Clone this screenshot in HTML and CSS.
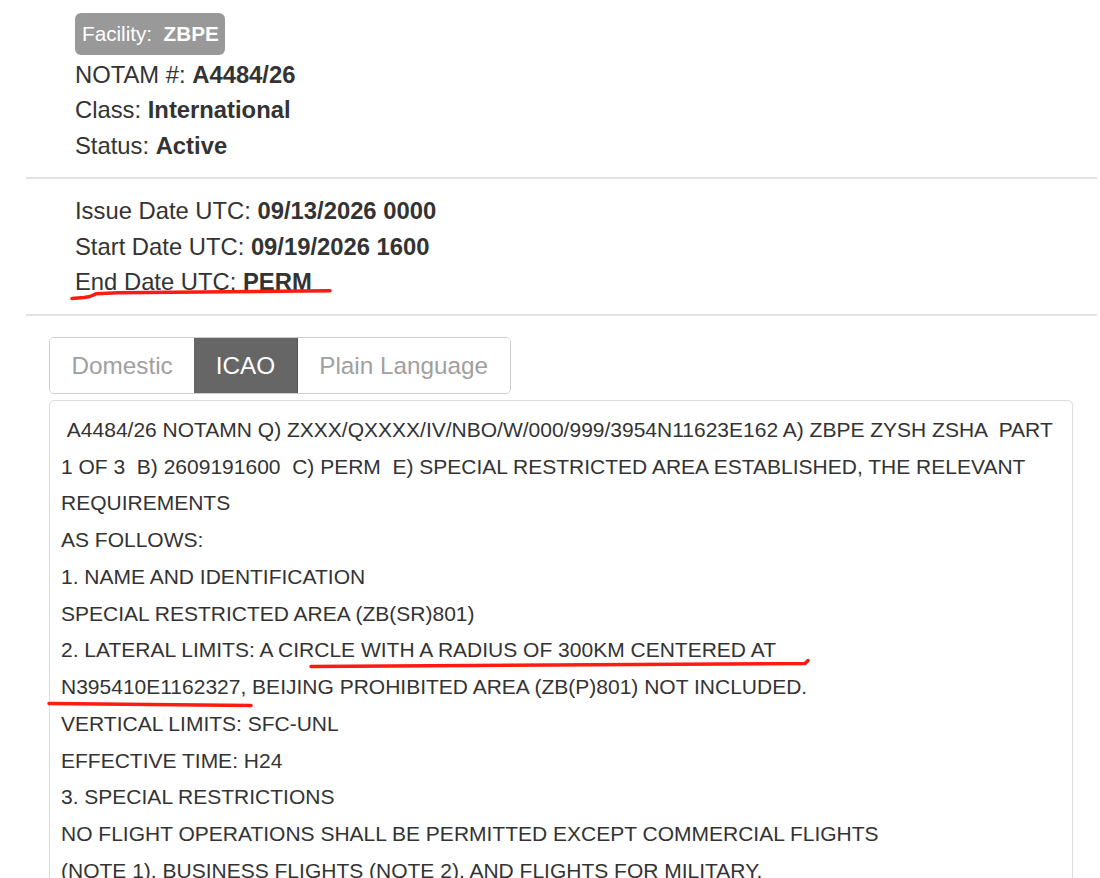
FILE: index.html
```html
<!DOCTYPE html>
<html lang="en">
<head>
<meta charset="utf-8">
<title>NOTAM A4484/26</title>
<link rel="stylesheet" href="styles.css">
</head>
<body>
<div class="page">
  <section class="block block-top">
    <div class="badge">Facility:&nbsp; <b>ZBPE</b></div>
    <div class="row">NOTAM #: <b>A4484/26</b></div>
    <div class="row">Class: <b>International</b></div>
    <div class="row">Status: <b>Active</b></div>
  </section>
  <hr class="rule rule-1">
  <section class="block">
    <div class="row">Issue Date UTC: <b>09/13/2026 0000</b></div>
    <div class="row">Start Date UTC: <b>09/19/2026 1600</b></div>
    <div class="row">End Date UTC: <b>PERM</b></div>
  </section>
  <hr class="rule rule-2">
  <div class="tabs">
    <span class="tab">Domestic</span><span class="tab active">ICAO</span><span class="tab">Plain Language</span>
  </div>
  <div class="panel">
<div class="notam"> A4484/26 NOTAMN Q) ZXXX/QXXXX/IV/NBO/W/000/999/3954N11623E162 A) ZBPE ZYSH ZSHA  PART
1 OF 3  B) 2609191600  C) PERM  E) SPECIAL RESTRICTED AREA ESTABLISHED, THE RELEVANT
REQUIREMENTS
AS FOLLOWS:
1. NAME AND IDENTIFICATION
SPECIAL RESTRICTED AREA (ZB(SR)801)
2. LATERAL LIMITS: A CIRCLE WITH A RADIUS OF 300KM CENTERED AT
N395410E1162327, BEIJING PROHIBITED AREA (ZB(P)801) NOT INCLUDED.
VERTICAL LIMITS: SFC-UNL
EFFECTIVE TIME: H24
3. SPECIAL RESTRICTIONS
NO FLIGHT OPERATIONS SHALL BE PERMITTED EXCEPT COMMERCIAL FLIGHTS
(NOTE 1), BUSINESS FLIGHTS (NOTE 2), AND FLIGHTS FOR MILITARY,</div>
  </div>
</div>
<svg class="marks" width="1100" height="878" viewBox="0 0 1100 878" aria-hidden="true">
  <path d="M72 298.5 L84 297.5 L90 296.5 L96 293.8 L118 292.8 L330 290.8" />
  <path d="M311 666.5 L805 663.5 L808 660.5" />
  <path d="M49 703.5 L251 705.5" />
</svg>
</body>
</html>
```

FILE: styles.css
```css
html, body {
  margin: 0;
  padding: 0;
}

body {
  position: relative;
  width: 1100px;
  height: 878px;
  overflow: hidden;
  background: #fff;
  color: #333;
  font-family: "Liberation Sans", Arial, Helvetica, sans-serif;
}

.page {
  padding: 13px 3px 0 26px;
}

.block {
  padding-left: 49px;
}

.badge {
  width: fit-content;
  height: 42px;
  line-height: 42px;
  padding: 0 6px 0 7px;
  margin-bottom: 1.5px;
  background: #999;
  color: #fff;
  border-radius: 6px;
  font-size: 20.7px;
}

.row {
  font-size: 23.8px;
  line-height: 35.6px;
}

.rule {
  border: 0;
  height: 2px;
  background: #e2e2e2;
}

.rule-1 {
  margin: 13.7px 0 14.2px;
}

.rule-2 {
  margin: 14px 0 21px;
}

.tabs {
  display: flex;
  width: fit-content;
  margin-left: 23px;
  border: 1px solid #ccc;
  border-radius: 5px;
  overflow: hidden;
}

.tab {
  height: 55px;
  line-height: 55px;
  padding: 0 21.5px;
  font-size: 24.3px;
  color: #a0a0a0;
  background: #fff;
}

.tab.active {
  background: #666;
  color: #fff;
  border-right: 1px solid #555;
}

.panel {
  margin: 6px 24px 0 23px;
  border: 1px solid #ddd;
  border-radius: 5px;
  padding: 11px 11px 20px;
}

.notam {
  font-size: 21px;
  line-height: 36.75px;
  white-space: pre-wrap;
  color: #333;
}

.marks {
  position: absolute;
  top: 0;
  left: 0;
  pointer-events: none;
}

.marks path {
  fill: none;
  stroke: #ff1a12;
  stroke-width: 3.5;
  stroke-linecap: round;
  stroke-linejoin: round;
}
```
